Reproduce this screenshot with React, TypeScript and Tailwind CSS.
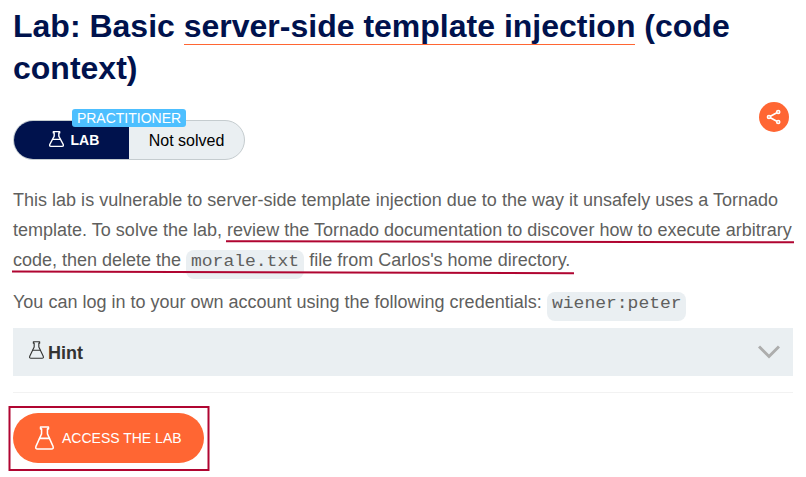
import React from "react";

function Flask({ className, stroke = 1 }: { className: string; stroke?: number }) {
  return (
    <svg
      viewBox="0 0 20 24"
      preserveAspectRatio="none"
      className={className}
      fill="none"
      stroke="currentColor"
      strokeLinejoin="round"
      strokeLinecap="round"
    >
      <g strokeWidth={stroke}>
        <path d="M5.8 1h8.4v1.9h-1.1v5L19 20.4q.8 2.6-1.6 2.6H2.6Q.2 23 1 20.4L6.9 7.9v-5H5.8z" />
        <path d="M4.8 12.4h10.4" />
      </g>
    </svg>
  );
}

function Code({ className, children }: { className: string; children: React.ReactNode }) {
  return (
    <code
      className={`${className} block h-[29px] rounded-[8px] bg-[#eaeff2] pl-[5px] font-['Liberation_Mono',monospace] text-[16px] leading-[24px]`}
    >
      <span className="inline-block origin-left scale-x-[1.125] align-top">{children}</span>
    </code>
  );
}

export default function App() {
  return (
    <main className="relative h-[477px] w-[806px] overflow-hidden bg-white pl-[13px] pr-[13px] pt-[5px] font-['Liberation_Sans',Arial,sans-serif] text-[#5f5f5e]">
      <h1 className="whitespace-nowrap text-[32px] font-bold leading-[42px] text-[#00124d]">
        Lab: Basic{" "}
        <span className="inline-block h-[40px] border-b border-[#ff6633] align-top">
          server-side template injection
        </span>{" "}
        (code
        <br />
        context)
      </h1>

      <div className="mt-[13px] flex h-[58px] justify-between">
        <div className="relative mt-[18px] flex h-[40px] w-[232px] overflow-visible rounded-full border border-[#c5cccf] bg-[#eaeff2]">
          <div className="flex w-[115px] items-center rounded-l-full bg-[#00124d] pl-[34.5px] text-white">
            <Flask className="mt-[-2px] h-[16px] w-[15px]" stroke={1.9} />
            <span className="ml-[7px] text-[14px] font-bold">LAB</span>
          </div>
          <div className="flex flex-1 items-center justify-center pt-px text-[16px] text-black">Not solved</div>
          <span className="absolute left-[58px] top-[-12px] h-[18px] w-[114px] rounded-[3px] bg-[#4dbfff] text-center text-[14px] leading-[18px] text-white">
            PRACTITIONER
          </span>
        </div>
        <button className="mr-[4px] flex h-[30px] w-[30px] items-center justify-center rounded-full bg-[#ff6633] text-white">
          <svg className="h-[16px] w-[16px]" viewBox="0 0 16 16" fill="none" stroke="currentColor" strokeWidth="1.7">
            <circle cx="3" cy="8" r="1.5" />
            <circle cx="12.2" cy="3" r="1.5" />
            <circle cx="12.2" cy="13" r="1.5" />
            <path d="M4.4 7.2l6.4-3.4M4.4 8.8l6.4 3.4" />
          </svg>
        </button>
      </div>

      <p className="mt-[25px] whitespace-nowrap text-[18px] leading-[30px]">
        <span className="block h-[30px] tracking-[0.01px]">
          This lab is vulnerable to server-side template injection due to the way it unsafely uses a Tornado
        </span>
        <span className="block h-[30px] tracking-[0.01px]">
          template. To solve the lab, review the Tornado documentation to discover how to execute arbitrary
        </span>
        <span className="flex h-[30px] whitespace-pre">
          <span>code, then delete the </span>
          <span className="pt-[5px]"><Code className="w-[118px]">morale.txt</Code></span>
          <span> file from Carlos's home directory.</span>
        </span>
      </p>
      <p className="mt-[12px] flex h-[30px] whitespace-pre text-[18px] leading-[30px]">
        <span>You can log in to your own account using the following credentials: </span>
        <span className="pt-[5px]"><Code className="w-[139.5px]">wiener:peter</Code></span>
      </p>

      <section className="mt-[11px] flex h-[48px] items-center bg-[#eaeff2] pl-[16px] pr-[13px]">
        <Flask className="mt-[-5px] h-[18px] w-[15px] text-[#333332]" stroke={1.5} />
        <span className="ml-[4px] mt-[2px] text-[18px] font-bold text-[#333332]">Hint</span>
        <svg className="ml-auto h-[14px] w-[22px]" viewBox="0 0 22 14" fill="none" stroke="#adadad" strokeWidth="3">
          <path d="M1 1.5l10 10 10-10" />
        </svg>
      </section>
      <hr className="mt-[16px] border-[#f2f2f2]" />
      <button className="mt-[20px] flex h-[50px] w-[191px] items-center rounded-full bg-[#ff6633] pl-[22px] text-[14px] text-white">
        <Flask className="h-[24px] w-[19px]" stroke={1.6} />
        <span className="ml-[8px]">ACCESS THE LAB</span>
      </button>

      <svg
        className="pointer-events-none absolute left-0 top-0 h-[477px] w-[806px]"
        viewBox="0 0 806 477"
        fill="none"
        stroke="#b00531"
        strokeWidth="2"
      >
        <path d="M226 241.3L794 242.3M12 271.4L574 273.3" />
        <rect x="9.5" y="407" width="199" height="63" />
      </svg>
    </main>
  );
}
